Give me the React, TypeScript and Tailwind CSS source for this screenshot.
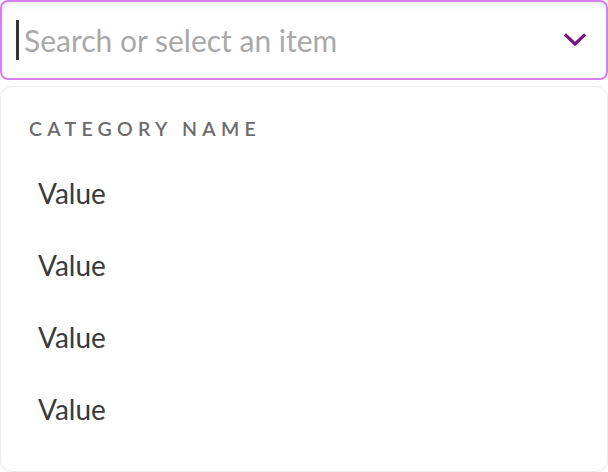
import { useState } from "react";

const items = ["Value", "Value", "Value", "Value"];

export default function App() {
  const [query, setQuery] = useState("");

  return (
    <div
      className="flex h-[472px] w-[608px] flex-col gap-[6px] overflow-hidden bg-white"
      style={{ fontFamily: "Lato, 'Noto Sans', sans-serif" }}
    >
      <div className="flex h-[80px] shrink-0 items-center rounded-lg border-2 border-[#d580f2] bg-white pl-[14px] pr-[20px] shadow-[inset_0_6px_10px_-6px_rgba(0,0,0,0.12),inset_6px_0_10px_-8px_rgba(0,0,0,0.08)]">
        <span className="h-[40px] w-[3px] shrink-0 bg-[#333]" />
        <input
          value={query}
          onChange={(e) => setQuery(e.target.value)}
          placeholder="Search or select an item"
          className="ml-[5px] min-w-0 flex-1 bg-transparent text-[30px] text-[#333] outline-none placeholder:text-[#a8a8a8]"
        />
        <svg
          width="22"
          height="14"
          viewBox="0 0 22 14"
          fill="none"
          className="shrink-0"
        >
          <path
            d="M2 2.5 L11 11 L20 2.5"
            stroke="#7a1485"
            strokeWidth="3.2"
            strokeLinecap="square"
          />
        </svg>
      </div>

      <div className="flex flex-1 flex-col rounded-xl border border-[#ececec] bg-white shadow-[0_1px_2px_rgba(0,0,0,0.04)]">
        <p className="pl-[28px] pt-[32px] text-[19.5px] font-semibold uppercase leading-none tracking-[0.27em] text-[#6b6b6b]">
          Category name
        </p>
        <ul className="mt-[18px] flex flex-col">
          {items.map((v, i) => (
            <li
              key={i}
              className="flex h-[72px] items-center pl-[37px] text-[28px] text-[#3a3a3a]"
            >
              {v}
            </li>
          ))}
        </ul>
      </div>
    </div>
  );
}
